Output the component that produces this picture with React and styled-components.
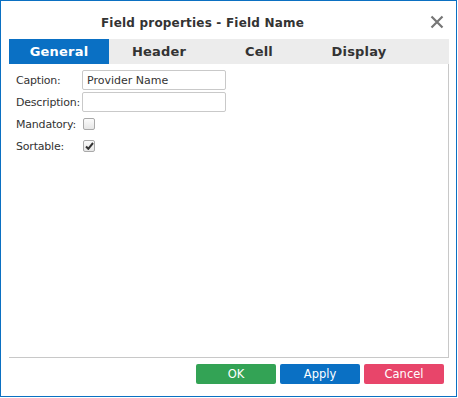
import styled, { createGlobalStyle } from "styled-components";

const GlobalStyle = createGlobalStyle`
    html, body {
        margin: 0;
        padding: 0;
        background: #fff;
    }
    body {
        font-family: "DejaVu Sans", Verdana, sans-serif;
        color: #333;
    }
`;

const Window = styled.div`
    box-sizing: border-box;
    width: 457px;
    height: 397px;
    border: 1px solid #0b70c2;
    background: #fff;
    display: flex;
    flex-direction: column;
`;

const TitleBar = styled.div`
    height: 38px;
    display: flex;
    align-items: center;
    position: relative;
    padding-right: 52px;
`;

const Title = styled.div`
    flex: 1;
    text-align: center;
    font-size: 12px;
    font-weight: bold;
    color: #333;
    letter-spacing: 0.2px;
    padding-top: 6px;
`;

const CloseButton = styled.button`
    position: absolute;
    right: 12px;
    top: 14px;
    width: 14px;
    height: 14px;
    padding: 0;
    border: 0;
    background: transparent;
    cursor: pointer;
    display: flex;
`;

const Tabs = styled.div`
    margin: 0 7px 0 8px;
    height: 25px;
    background: #ececec;
    display: flex;
`;

const Tab = styled.div`
    width: 100px;
    display: flex;
    align-items: center;
    justify-content: center;
    font-size: 13px;
    font-weight: bold;
    letter-spacing: 0.2px;
    color: ${(p) => (p.$active ? "#fff" : "#333")};
    background: ${(p) => (p.$active ? "#0a70c4" : "transparent")};
`;

const Panel = styled.div`
    margin: 0 7px 0 8px;
    height: 294px;
    box-sizing: border-box;
    border-right: 1px solid #c8c8c8;
    border-bottom: 1px solid #c8c8c8;
    padding: 5px 0 0 7px;
`;

const Form = styled.div`
    display: grid;
    grid-template-columns: 66px auto;
    grid-auto-rows: 22px;
    align-items: center;
    justify-items: start;
`;

const Label = styled.label`
    font-size: 11px;
    color: #333;
    letter-spacing: -0.2px;
`;

const TextInput = styled.input`
    box-sizing: border-box;
    width: 144px;
    height: 20px;
    border: 1px solid #c9c9c9;
    border-radius: 2px;
    padding: 0 4px;
    font-family: "DejaVu Sans", Verdana, sans-serif;
    font-size: 11px;
    color: #333;
    outline: none;
`;

const CheckBox = styled.span`
    box-sizing: border-box;
    width: 12px;
    height: 12px;
    margin-left: 1px;
    border: 1px solid #a9a9a9;
    border-radius: 2px;
    background: linear-gradient(#fbfbfb, #e6e6e6);
    display: flex;
    align-items: center;
    justify-content: center;
`;

const Footer = styled.div`
    flex: 1;
    display: flex;
    justify-content: flex-end;
    align-items: flex-start;
    gap: 4px;
    padding: 6px 12px 0 0;
`;

const Button = styled.button`
    width: 80px;
    height: 20px;
    border: 0;
    border-radius: 2px;
    padding: 0;
    background: ${(p) => p.$color};
    color: #fff;
    font-family: "DejaVu Sans", Verdana, sans-serif;
    font-size: 11.5px;
    cursor: pointer;
`;

function Check({ checked }) {
    return (
        <CheckBox>
            {checked && (
                <svg width="9" height="8" viewBox="0 0 9 8">
                    <path d="M1 4.5 L3.3 6.8 L8 1" fill="none" stroke="#333" strokeWidth="2" />
                </svg>
            )}
        </CheckBox>
    );
}

export default function App() {
    const tabs = ["General", "Header", "Cell", "Display"];
    return (
        <>
            <GlobalStyle />
            <Window>
                <TitleBar>
                    <Title>Field properties - Field Name</Title>
                    <CloseButton aria-label="Close">
                        <svg width="14" height="14" viewBox="0 0 14 14">
                            <path d="M1.5 1.5 L12.5 12.5 M12.5 1.5 L1.5 12.5" stroke="#767676" strokeWidth="2.2" />
                        </svg>
                    </CloseButton>
                </TitleBar>
                <Tabs>
                    {tabs.map((t, i) => (
                        <Tab key={t} $active={i === 0}>{t}</Tab>
                    ))}
                </Tabs>
                <Panel>
                    <Form>
                        <Label>Caption:</Label>
                        <TextInput defaultValue="Provider Name" />
                        <Label>Description:</Label>
                        <TextInput defaultValue="" />
                        <Label>Mandatory:</Label>
                        <Check />
                        <Label>Sortable:</Label>
                        <Check checked />
                    </Form>
                </Panel>
                <Footer>
                    <Button $color="#33a355">OK</Button>
                    <Button $color="#0a70c4">Apply</Button>
                    <Button $color="#e8456a">Cancel</Button>
                </Footer>
            </Window>
        </>
    );
}
